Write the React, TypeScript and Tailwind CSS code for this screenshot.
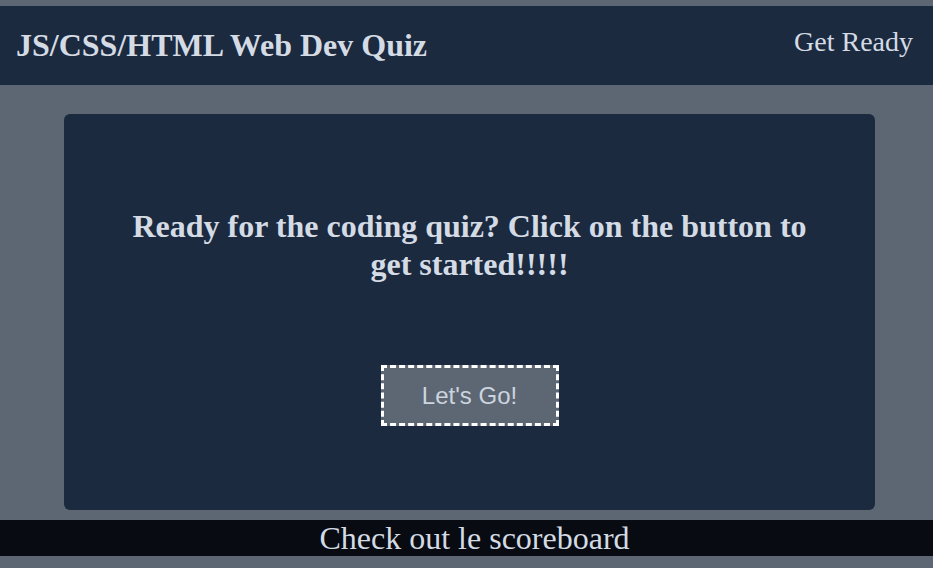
export default function App() {
  return (
    <div className="min-h-[568px] bg-[#5d6774] pt-[6px] font-['Liberation_Serif','Times_New_Roman',serif] text-[#d4dbe4]">
      <header className="flex h-[79px] items-center justify-between bg-[#1b2a3f] pl-[16px] pr-[20px]">
        <h1 className="text-[32px] font-bold leading-[37px]">JS/CSS/HTML Web Dev Quiz</h1>
        <p className="mb-[8px] text-[28px] leading-[32px]">Get Ready</p>
      </header>

      <main className="px-[64px] pt-[29px]">
        <section className="flex h-[396px] w-[811px] flex-col items-center rounded-[6px] bg-[#1b2a3f] pt-[93px]">
          <h2 className="max-w-[700px] text-center text-[32px] font-bold leading-[38px]">
            Ready for the coding quiz? Click on the button to get started!!!!!
          </h2>
          <button className="mt-[82px] flex h-[61px] w-[178px] items-center justify-center border-[3px] border-dashed border-white bg-[#5d6774] font-['Liberation_Sans',Arial,sans-serif] text-[24px] text-[#ccd4df]">
            Let's Go!
          </button>
        </section>
      </main>

      <footer className="mt-[10px] flex h-[36px] items-center justify-center bg-[#080c12] pl-[16px] text-[32px] leading-[36px]">
        Check out le scoreboard
      </footer>
    </div>
  );
}
